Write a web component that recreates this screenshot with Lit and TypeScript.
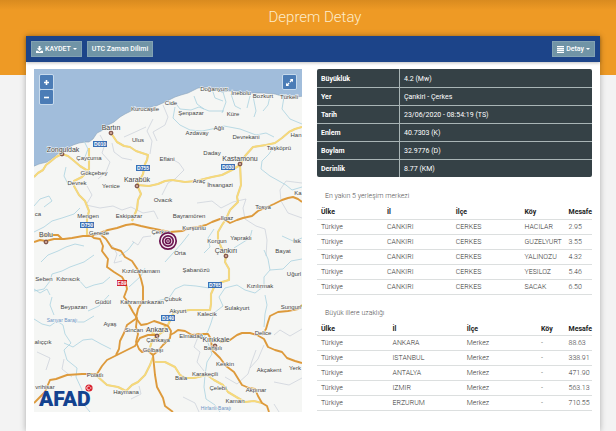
import { LitElement, html, svg, css } from "lit";
import { customElement } from "lit/decorators.js";

type Label = [string, number, number];

const TOWNS: Label[] = [
  ["Kurucaşile", 111, 42], ["Ulus", 104, 73], ["Çaycuma", 55, 91], ["Gökçebey", 60, 106],
  ["Devrek", 43, 116], ["Yenice", 77, 119], ["Eflani", 133, 92], ["Cide", 137, 36],
  ["Doğanyurt", 180, 22], ["İnebolu", 207, 26], ["Bozkurt", 229, 29], ["Türkeli", 255, 30],
  ["Şenpazar", 157, 46], ["Küre", 199, 47], ["Ağlı", 185, 61], ["Azdavay", 163, 66],
  ["Devrekani", 212, 70], ["Han", 262, 68], ["Taşköprü", 245, 81], ["Daday", 178, 86],
  ["Araç", 165, 114], ["İhsangazi", 186, 118], ["ca", 4, 147], ["Mengen", 54, 149],
  ["Eskipazar", 95, 149], ["Ovacık", 129, 133], ["Gerede", 65, 166], ["Çerkeş", 127, 165],
  ["Kızılcahamam", 107, 204], ["Seben", 10, 212], ["Kıbrıscık", 34, 212], ["Bayramören", 155, 149],
  ["Kurşunlu", 160, 161], ["Ilgaz", 193, 151], ["Tosya", 229, 140], ["Ka", 264, 126],
  ["Korgun", 183, 174], ["Yapraklı", 207, 171], ["Orta", 146, 186], ["Şabanözü", 162, 203],
  ["Bayat", 249, 184], ["İsk", 263, 174], ["Uğurl", 260, 207], ["Kızılırmak", 226, 219],
  ["Çubuk", 139, 232], ["Güdül", 69, 235], ["Beypazarı", 40, 240], ["Kahramankazan", 108, 235],
  ["Ayaş", 76, 257], ["Sincan", 100, 263], ["Çankaya", 124, 273], ["Gölbaşı", 119, 283],
  ["alıççık", 9, 275], ["Polatlı", 61, 308], ["vrihisar", 11, 320], ["Haymana", 92, 325],
  ["Akyurt", 144, 244], ["Kalecik", 173, 247], ["Sulakyurt", 203, 241], ["Sungurl", 257, 240],
  ["Elmadağ", 157, 269], ["Bahşılı", 179, 281], ["Delice", 229, 266], ["Keskin", 191, 297],
  ["Akçakent", 235, 303], ["Yerk", 261, 301], ["Bala", 147, 311], ["Karakeçili", 171, 307],
  ["Çelebi", 184, 321], ["Akpınar", 222, 323], ["Kaman", 201, 334],
];

const CITIES: Label[] = [
  ["Bartın", 77, 61], ["Zonguldak", 29, 83], ["Karabük", 103, 113], ["Kastamonu", 206, 92],
  ["Bolu", 12, 168], ["Çankırı", 192, 184], ["Ankara", 123, 263], ["Kırıkkale", 182, 273],
];

const LAKES: Label[] = [["Sarıyar Barajı", 28, 253], ["Hirfanlı Barajı", 182, 341]];

const CITY_DOTS = [
  [77, 64], [28, 85], [103, 117], [206, 95], [12, 173], [192, 187], [123, 267], [181, 277],
];

const ROAD_SIGNS: Label[] = [
  ["D010", 66, 75], ["D755", 109, 99], ["D030", 194, 98],
  ["D750", 53, 156], ["D765", 181, 216], ["D140", 134, 249],
];

const MAIN_ROADS = [
  "M0 173L6 171 12 172 20 170 30 170 38 169 49 167 57 167 66 164 74 161 83 159 92 156 99 155 107 157 116 159 126 161 136 163 148 162 156 159 164 158 172 156 178 153 186 150 190 150 196 154 203 151 209 149 218 147 224 142 231 139 240 135 248 131 254 129 259 128 264 130 268 133",
  "M6 168L11 166 24 166 28 170",
  "M55 165L60 169 66 170 69 177 68 182 74 190 73 198 80 203 88 208 92 215 93 220 90 228 93 232 99 243 103 249 102 258 104 265 102 273 105 280 108 283 113 281 119 286",
  "M66 165L72 170 78 179 87 182 91 188 98 192 104 201 107 210 109 218 109 231 104 240 102 249 107 256 113 255 120 252 126 254 134 257 137 262 136 269 129 276 124 282 119 286 121 306 123 318 129 329 131 337 139 343",
  "M123 266L114 266 106 269 101 277 93 281 83 286 73 291 68 297 63 305 48 305 33 306 22 310 16 311 13 318 11 323 5 329 0 334",
  "M103 249L93 256 90 264 86 272 85 280 82 286",
  "M136 266L140 264 144 261 151 262 158 266 166 265 174 265 177 270 178 281 186 289 192 297 200 303 208 316 215 319 221 320 224 327 228 334 233 337 235 343",
  "M186 273L196 271 203 266 208 264 216 264 223 266 230 270 234 278 241 281 248 283 253 289 261 292 268 294",
  "M228 266L232 260 234 253 236 247 244 243 254 242 264 240 268 236",
];

const SIDE_ROADS = [
  "M0 108L4 104 9 101 12 96 16 93 22 88 28 85 34 87 39 91 46 97 54 102",
  "M77 64L83 73 90 77 96 78 102 82 108 84 114 86 113 91 111 95 109 105 103 116 107 125 104 131 103 140 98 152",
  "M55 79L55 90 55 100 48 108 40 112 40 117 45 126 51 132 55 142 53 150 53 166",
  "M103 116L115 117 124 115 131 112 138 111 151 113 162 112 178 108 188 106 198 101 206 96 211 87 219 78 232 76 241 74 248 69 255 63 261 60 268 58",
  "M206 95L207 116 203 128 204 133 196 141 192 150 188 156 184 163 184 170 187 178 192 187 191 193 195 200 195 211 188 213 181 216 177 225 177 235 176 241 156 241 140 243 134 256",
  "M119 288L116 296 111 306 104 313 98 316 92 322 84 318 73 316 63 307",
  "M121 293L131 293 141 298 146 306 151 309 160 309 173 306 180 311 189 316 194 323 204 329 211 333 220 332 228 334",
  "M123 267L118 272 115 282 119 286M112 260L119 264 123 267 130 262 131 256",
];

const RIVERS = [
  "M35 117L30 107 32 98M50 72L54 80 51 88",
  "M140 32L146 40 157 41 165 38 175 42 190 42M141 38L139 49 146 56 156 61 168 62 178 60 190 57 206 60 214 63 222 66 232 64 240 68",
  "M160 27L163 35 170 40M178 20L181 29 189 32M189 23L192 33 188 44M197 25L201 37 207 40M216 27L213 39M219 27L222 42 220 48M236 27L234 36 229 42M250 28L248 40 256 50 268 55",
  "M268 118L258 121 252 116 245 112 236 107 227 100 228 92 235 85 240 77",
  "M0 137L6 130 15 127 18 132 10 138M0 163L10 158 18 152 28 149 40 145 46 139",
  "M7 193L14 186 24 182 32 178 41 175 50 177M0 222L10 220 16 212 18 205 28 202 36 198 50 193 60 186",
  "M0 220L6 224 13 220 16 226M44 210L52 219 60 216 69 214 76 208",
  "M268 190L257 192 249 200 236 201 230 208 230 217 221 224 211 221 203 216 191 219 185 228 189 237 180 244 177 254 174 262 170 268 174 274 178 285 173 293 171 306 170 318 172 330 181 336 186 343",
  "M236 201L234 190 230 181M268 169L259 172 248 167M123 232L135 229 141 220 150 216 162 217 175 219",
  "M0 250L8 255 16 257 23 252 29 256 31 265 37 274 30 281 33 291 43 299 42 308 48 321 46 331 56 343",
  "M30 274L39 278 49 271 58 270 67 275 77 280M54 242L65 237 75 226M20 246L16 236 18 228M60 247L50 253 38 253",
  "M231 226L233 236 231 245 230 258M95 218L107 207 111 199M180 160L174 169 176 178 170 184M155 165L148 174 140 183 131 193",
  "M218 161L216 169 208 174 200 179M100 173L94 181 85 187",
];

const STREAMS = [
  "M129 36L134 48 131 56 119 63 123 72M119 50L113 62 118 72 116 85",
  "M66 66L71 75 68 84 76 93 72 103 64 110M78 74L80 83 88 89 98 91",
  "M90 68L99 64 112 58M53 117L58 126 52 136 66 139 79 137 88 141 97 138 109 144 120 142 124 150",
  "M134 88L145 94 150 101 141 110 134 114 128 126",
  "M163 134L178 132 187 139 199 133 212 130 209 139 211 150 222 157 231 160 233 171 232 187",
  "M268 114L252 112 246 121 247 132 254 144 268 149",
  "M117 167L109 168 104 176 98 172M78 176L83 185 80 194 88 192",
  "M164 268L160 278 166 283 163 293 170 302M222 281L218 292 214 305 203 315 191 308M230 276L224 290 216 299",
  "M268 260L256 267 246 261 240 266M240 313L255 316 268 309M3 283L16 289 12 301",
  "M30 290L28 300 38 308M97 330L107 325 105 317M245 343L240 335M149 328L161 334 165 343",
];

const DETAILS = [
  ["Büyüklük", "4.2 (Mw)"],
  ["Yer", "Çankiri - Çerkes"],
  ["Tarih", "23/06/2020 - 08:54:19 (TS)"],
  ["Enlem", "40.7303 (K)"],
  ["Boylam", "32.9776 (D)"],
  ["Derinlik", "8.77 (KM)"],
];

const HEADERS = ["Ülke", "İl", "İlçe", "Köy", "Mesafe"];

const NEAREST = [
  ["Türkiye", "CANKIRI", "CERKES", "HACILAR", "2.95"],
  ["Türkiye", "CANKIRI", "CERKES", "GUZELYURT", "3.55"],
  ["Türkiye", "CANKIRI", "CERKES", "YALINOZU", "4.32"],
  ["Türkiye", "CANKIRI", "CERKES", "YESILOZ", "5.46"],
  ["Türkiye", "CANKIRI", "CERKES", "SACAK", "6.50"],
];

const MAJOR = [
  ["Türkiye", "ANKARA", "Merkez", "-", "88.63"],
  ["Türkiye", "ISTANBUL", "Merkez", "-", "338.91"],
  ["Türkiye", "ANTALYA", "Merkez", "-", "471.90"],
  ["Türkiye", "IZMIR", "Merkez", "-", "563.13"],
  ["Türkiye", "ERZURUM", "Merkez", "-", "710.55"],
];

@customElement("quake-map")
export class QuakeMap extends LitElement {
  static styles = css`
    :host { display: block; position: relative; }
    .map { display: block; width: 100%; height: auto; background: #f5f6f4; }
    .sea { fill: #a1bddb; stroke: #8aa3bb; stroke-width: 0.6; }
    .river { fill: none; stroke: #a9d2e0; stroke-width: 0.8; stroke-linejoin: round; }
    .stream { fill: none; stroke: #c9ced9; stroke-width: 0.7; stroke-linejoin: round; }
    .casing { fill: none; stroke: #e2cf94; stroke-width: 2.1; stroke-linejoin: round; }
    .side { fill: none; stroke: #f8da78; stroke-width: 1.5; stroke-linejoin: round; }
    .main { fill: none; stroke: #dd9a3c; stroke-width: 1.9; stroke-linejoin: round; }
    .town, .city, .lake {
      font-family: "Liberation Sans", Arial, sans-serif;
      text-anchor: middle;
      fill: #444;
      stroke: #f7f8f6;
      stroke-width: 1;
      paint-order: stroke;
    }
    .town { font-size: 6px; }
    .city { font-size: 7px; }
    .lake { font-size: 5px; fill: #6c93c4; }
    .dot { fill: #c9a08f; stroke: #6d4038; stroke-width: 1; }
    .sign { fill: #3a6fb4; }
    .sign-red { fill: #d2232f; }
    .sign-text {
      font: bold 5px "Liberation Sans", Arial, sans-serif;
      fill: #fff;
      text-anchor: middle;
    }
    .halo { fill: #f7eef4; }
    .ring { fill: none; stroke: #6b1550; stroke-width: 1.7; }
    .core { fill: #6b1550; }
    .logo { font: 900 21px Roboto, "Liberation Sans", sans-serif; fill: #14428f; }
    .flag { fill: #d8202c; }
    .moon { fill: none; stroke: #fff; stroke-width: 0.9; }
    .zoom, .full { position: absolute; top: 5px; display: grid; border: 1px solid #c7daec; border-radius: 2px; }
    .zoom { left: 5px; gap: 1px; background: #c7daec; }
    .full { right: 5px; }
    .btn { width: 13px; height: 14px; padding: 0; border: 0; background: #4b7cb6; display: grid; place-items: center; border-radius: 1px; }
    .glyph { display: block; width: 9px; height: 9px; fill: none; stroke: #fff; stroke-width: 1.6; }
    .arrow { fill: #fff; stroke: none; }
  `;

  render() {
    const line = (cls: string) => (d: string) => svg`<path class=${cls} d=${d}></path>`;
    const text = (cls: string) => ([t, x, y]: Label) => svg`<text class=${cls} x=${x} y=${y}>${t}</text>`;
    return html`
      <svg class="map" viewBox="0 0 268 343" role="img" aria-label="Deprem haritası">
        <path class="sea" d="M-2 -2H270V27L262 28 251 28 241 25 228 24 211 24 203 22 194 22 188 23 181 20 174 18 164 19 154 24 147 26 141 28 131 33 122 37 113 39 105 40 99 41 91 45 86 48 80 53 74 56 69 61 63 64 59 70 55 73 51 73 45 74 39 76 33 80 26 83 20 88 13 93 5 95 -2 98Z"></path>
        ${STREAMS.map(line("stream"))}
        ${RIVERS.map(line("river"))}
        ${SIDE_ROADS.map(line("casing"))}
        ${SIDE_ROADS.map(line("side"))}
        ${MAIN_ROADS.map(line("main"))}
        ${CITY_DOTS.map(([x, y]) => svg`<circle class="dot" cx=${x} cy=${y} r="1.9"></circle>`)}
        ${TOWNS.map(text("town"))}
        ${CITIES.map(text("city"))}
        ${LAKES.map(text("lake"))}
        ${ROAD_SIGNS.map(([t, x, y]) => svg`
          <rect class="sign" x=${x - 7} y=${y - 3} width="14" height="6"></rect>
          <text class="sign-text" x=${x} y=${y + 2}>${t}</text>`)}
        <rect class="sign-red" x="83" y="211" width="10" height="6"></rect>
        <text class="sign-text" x="88" y="216">E89</text>
        <circle class="halo" cx="134" cy="172" r="9"></circle>
        <circle class="ring" cx="134" cy="172" r="8.2"></circle>
        <circle class="ring" cx="134" cy="172" r="5.2"></circle>
        <circle class="ring" cx="134" cy="172" r="2.5"></circle>
        <circle class="core" cx="134" cy="172" r="0.9"></circle>
        <text class="logo" x="5" y="337">AFAD</text>
        <circle class="flag" cx="55" cy="319" r="3.6"></circle>
        <path class="moon" d="M55.600 320.700a1.900 1.900 0 1 1 0-3.400M56 319h1.400"></path>
      </svg>
      <div class="zoom">
        <button class="btn" aria-label="Yakınlaştır">
          <svg class="glyph" viewBox="0 0 9 9"><path d="M4.500 2v5M2 4.500h5"></path></svg>
        </button>
        <button class="btn" aria-label="Uzaklaştır">
          <svg class="glyph" viewBox="0 0 9 9"><path d="M2 4.500h5"></path></svg>
        </button>
      </div>
      <div class="full">
        <button class="btn" aria-label="Tam ekran">
          <svg class="glyph arrow" viewBox="0 0 9 9">
            <path d="M4.800 1H8v3.200L6.900 3.100 5.400 4.600 4.400 3.600 5.900 2.100ZM4.200 8H1V4.800L2.100 5.900 3.600 4.400 4.600 5.400 3.100 6.900Z"></path>
          </svg>
        </button>
      </div>
    `;
  }
}

@customElement("app-root")
export class AppRoot extends LitElement {
  static styles = css`
    :host {
      display: flex;
      flex-direction: column;
      min-height: 100vh;
      box-sizing: border-box;
      padding: 0 16px 0 26px;
      font: 7px/10px Roboto, "Liberation Sans", sans-serif;
      background: linear-gradient(#d98b1f, #ee9a25 10px, #ee9a25 75px, #f3f3f3 75px);
    }
    .title {
      margin: 0;
      padding: 6px 0 8px 4px;
      text-align: center;
      font-size: 15px;
      line-height: 22px;
      font-weight: 300;
      color: #fdeccb;
    }
    .card { flex: 1; background: #fff; box-shadow: 0 0 6px rgba(0, 0, 0, 0.3); }
    .bar {
      display: flex;
      gap: 5px;
      padding: 5px;
      background: #1c4489;
      box-shadow: 0 1px 3px rgba(0, 0, 0, 0.25);
    }
    .tool {
      display: flex;
      align-items: center;
      gap: 2px;
      height: 16px;
      padding: 0 4px;
      border: 1px solid #82a2b3;
      background: #7094a6;
      color: #fff;
      font: 500 7px/10px Roboto, "Liberation Sans", sans-serif;
    }
    .right { margin-left: auto; }
    .icon { width: 7px; height: 7px; fill: #fff; }
    .caret { border: 2px solid transparent; border-top-color: #fff; border-bottom: 0; }
    .body {
      display: grid;
      grid-template-columns: 268fr 275fr;
      gap: 15px;
      align-items: start;
      padding: 7px 8px 16px;
    }
    .table { width: 100%; table-layout: fixed; border-collapse: collapse; }
    th, td { box-sizing: border-box; text-align: left; }
    .info { background: #354146; color: #fff; border-radius: 2px; overflow: hidden; }
    .info th, .info td { height: 18px; padding: 2px 4px 0; border-bottom: 1px solid #a9b5b6; }
    .info tr:last-child th, .info tr:last-child td { border-bottom: 0; }
    .info th { width: 30%; border-right: 1px solid #a9b5b6; }
    .caption { padding: 0 8px 5px; text-align: left; font-weight: 300; color: #555; }
    .list { margin-top: 14px; }
    .list + .list { margin-top: 13px; }
    .list th, .list td {
      height: 15px;
      padding: 0 0 0 4px;
      border-bottom: 1px solid #dcdfdf;
      white-space: nowrap;
    }
    .list thead th { height: 13px; color: #222; }
    .list td { font-weight: 300; color: #333; }
    .c24 { width: 24%; }
    .c25 { width: 25%; }
    .c16 { width: 16%; }
    .c26 { width: 26%; }
    .c27 { width: 27%; }
    .c10 { width: 10%; }
  `;

  private list(caption: string, cols: string[], rows: string[][]) {
    return html`
      <table class="table list">
        <caption class="caption">${caption}</caption>
        <thead>
          <tr>${HEADERS.map((h, i) => html`<th class=${cols[i]} scope="col">${h}</th>`)}</tr>
        </thead>
        <tbody>
          ${rows.map((r) => html`<tr>${r.map((c) => html`<td>${c}</td>`)}</tr>`)}
        </tbody>
      </table>
    `;
  }

  render() {
    return html`
      <h1 class="title">Deprem Detay</h1>
      <main class="card">
        <div class="bar">
          <button class="tool">
            <svg class="icon" viewBox="0 0 7 7"><path d="M2.600 0h1.800v2.300h1.700L3.500 4.900.9 2.300h1.700ZM0 4.700h1.800l1.700 1.300 1.700-1.300H7V7H0Z"></path></svg>
            KAYDET <span class="caret"></span>
          </button>
          <button class="tool">UTC Zaman Dilimi</button>
          <button class="tool right">
            <svg class="icon" viewBox="0 0 7 7"><path d="M0 0h7v1.300H0ZM0 1.900h7v1.300H0ZM0 3.800h7v1.300H0ZM0 5.700h7V7H0Z"></path></svg>
            Detay <span class="caret"></span>
          </button>
        </div>
        <div class="body">
          <quake-map></quake-map>
          <div>
            <table class="table info">
              <tbody>
                ${DETAILS.map(([k, v]) => html`<tr><th scope="row">${k}</th><td>${v}</td></tr>`)}
              </tbody>
            </table>
            ${this.list("En yakın 5 yerleşim merkezi", ["c24", "c25", "c25", "c16", "c10"], NEAREST)}
            ${this.list("Büyük illere uzaklığı", ["c26", "c27", "c27", "c10", "c10"], MAJOR)}
          </div>
        </div>
      </main>
    `;
  }
}
